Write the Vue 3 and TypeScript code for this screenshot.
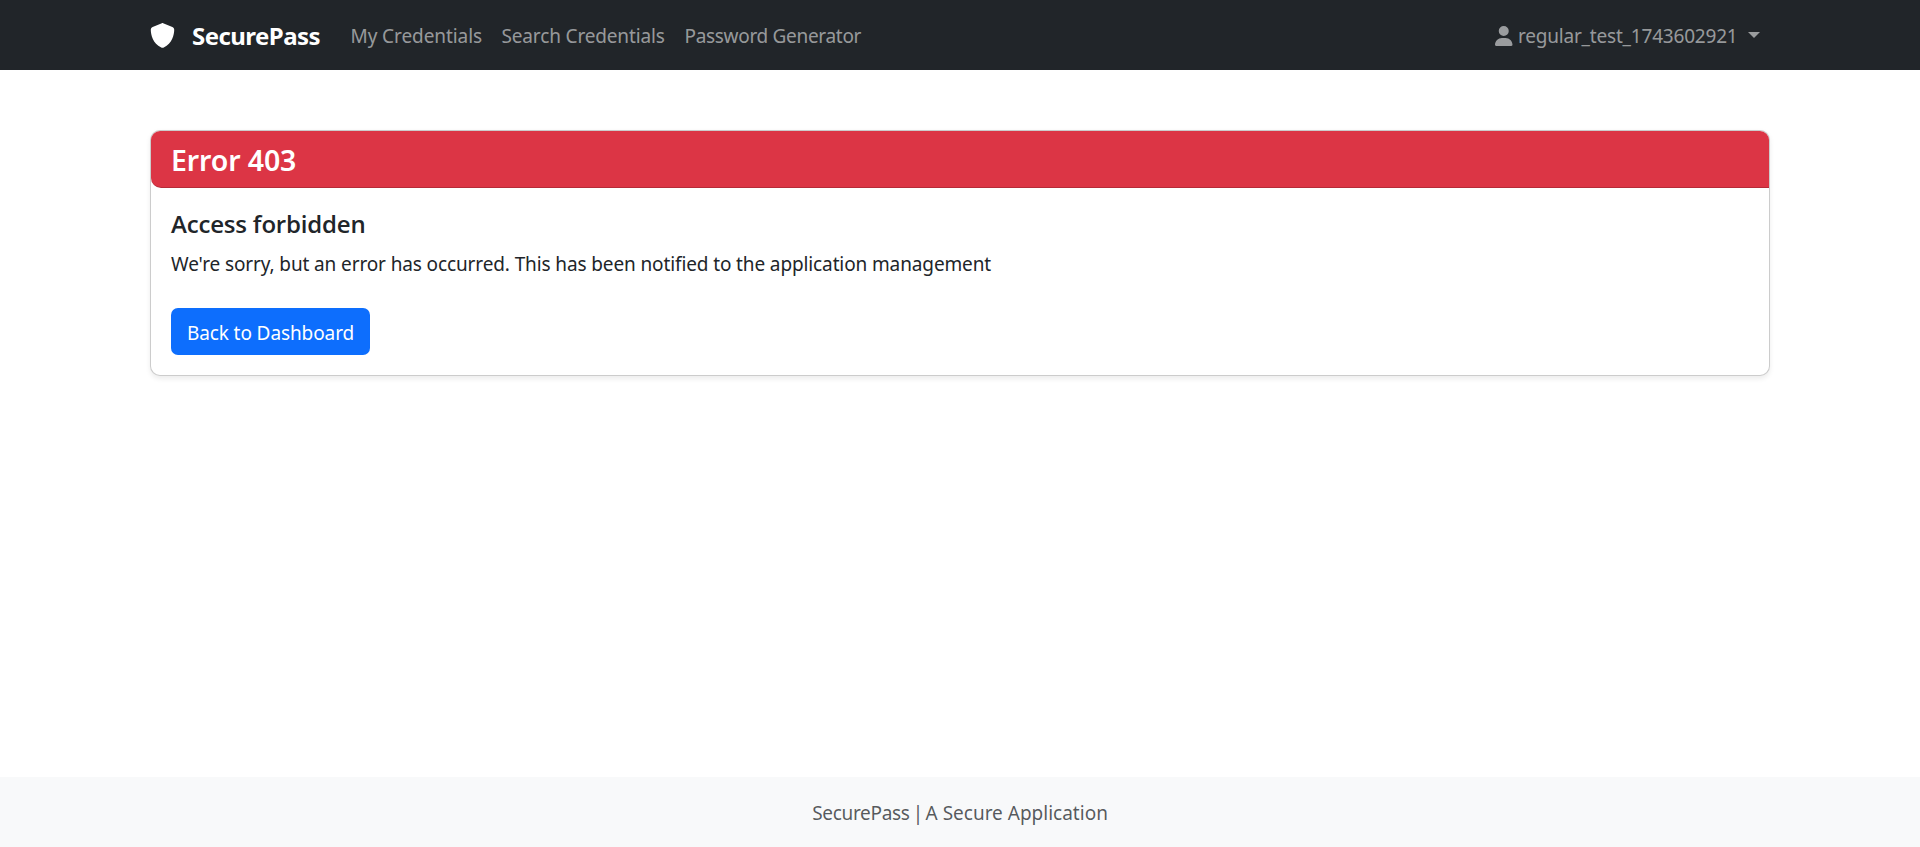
<script setup lang="ts">
interface NavItem {
  label: string
  name: string
}

const navItems: NavItem[] = [
  { label: 'My Credentials', name: 'credentials' },
  { label: 'Search Credentials', name: 'search' },
  { label: 'Password Generator', name: 'generator' },
]

const username = 'regular_test_1743602921'
const errorCode = 403
</script>

<template>
  <div class="page">
    <nav class="navbar">
      <div class="container navbar-inner">
        <a class="brand">
          <svg class="shield" viewBox="0 0 512 512" aria-hidden="true">
            <path
              fill="currentColor"
              d="M256 0c4.600 0 9.200 1 13.400 2.900L457.700 82.800c22 9.300 38.400 31 38.300 57.200c-.5 99.200-41.300 280.700-213.600 363.200c-16.700 8-36.100 8-52.800 0C57.300 420.700 16.500 239.200 16 140c-.1-26.200 16.300-47.900 38.300-57.200L242.700 2.900C246.800 1 251.400 0 256 0z"
            />
          </svg>
          <span class="brand-name">SecurePass</span>
        </a>
        <ul class="nav">
          <li v-for="item in navItems" :key="item.name">
            <a class="nav-link" :class="item.name">{{ item.label }}</a>
          </li>
        </ul>
        <a class="nav-link user">
          <svg class="user-icon" viewBox="0 0 448 512" aria-hidden="true">
            <path
              fill="currentColor"
              d="M224 256A128 128 0 1 0 224 0a128 128 0 1 0 0 256zm-45.700 48C79.800 304 0 383.800 0 482.300C0 498.700 13.300 512 29.700 512H418.300c16.400 0 29.700-13.300 29.700-29.700C448 383.800 368.200 304 269.700 304H178.300z"
            />
          </svg>
          <span class="user-name">{{ username }}</span>
          <span class="caret"></span>
        </a>
      </div>
    </nav>

    <main class="container main">
      <section class="card">
        <header class="card-header">
          <h4>Error {{ errorCode }}</h4>
        </header>
        <div class="card-body">
          <h5>Access forbidden</h5>
          <p class="message">We're sorry, but an error has occurred. This has been notified to the application management</p>
          <a class="button">Back to Dashboard</a>
        </div>
      </section>
    </main>

    <footer class="footer">
      <span><span class="product">SecurePass</span> <span class="divider">|</span> A Secure Application</span>
    </footer>
  </div>
</template>

<style>
body {
  margin: 0;
  background: #fff;
}
</style>

<style scoped>
.page {
  display: flex;
  flex-direction: column;
  min-height: 100vh;
  box-sizing: border-box;
  color: #212529;
  font-family: "Segoe UI", "Noto Sans", "Open Sans", sans-serif;
  font-size: 19px;
  line-height: 30px;
  letter-spacing: -0.12px;
  white-space: nowrap;
}

.container {
  width: 1620px;
  margin: 0 auto;
}

.navbar {
  background: #212529;
  color: #fff;
}

.navbar-inner {
  display: flex;
  align-items: center;
  height: 70px;
}

.brand {
  display: flex;
  align-items: center;
  width: 190.500px;
}

.shield {
  width: 25px;
  height: 25px;
  margin: 1px 17px 0 0;
}

.brand-name {
  font-size: 24px;
  font-weight: 700;
  line-height: 37px;
  letter-spacing: -0.55px;
}

.nav {
  display: flex;
  flex: 1;
  margin: 0;
  padding: 0;
  list-style: none;
}

.nav-link {
  display: block;
  box-sizing: border-box;
  padding: 11px 10px 9px;
  color: rgba(255, 255, 255, 0.55);
}

.credentials {
  width: 151px;
  letter-spacing: -0.08px;
}

.search {
  width: 183px;
  letter-spacing: -0.15px;
}

.generator {
  letter-spacing: -0.31px;
}

.user {
  display: flex;
  align-items: center;
}

.user-icon {
  width: 17.500px;
  height: 20px;
  margin: -1px 5.500px 0 0;
}

.user-name {
  width: 219px;
  letter-spacing: -0.2px;
}

.caret {
  margin: -2px 0 0 11px;
  border-top: 6px solid;
  border-right: 6px solid transparent;
  border-left: 6px solid transparent;
}

.main {
  flex: 1;
  padding-top: 60px;
}

.card {
  box-sizing: border-box;
  height: 246px;
  border: 1px solid rgba(0, 0, 0, 0.2);
  border-radius: 10px;
  background: #fff;
  box-shadow: 0 2.500px 5px rgba(0, 0, 0, 0.075);
}

.card-header {
  padding: 11px 20px 9px;
  border-bottom: 1px solid rgba(0, 0, 0, 0.175);
  border-radius: 9px 9px 0 10px;
  background: #dc3545;
  color: #fff;
}

h4,
h5 {
  margin: 0;
  font-weight: 600;
}

h4 {
  font-size: 28.500px;
  line-height: 36px;
  letter-spacing: -0.12px;
}

h5 {
  margin-bottom: 9px;
  padding-top: 1px;
  font-family: "Segoe UI", "Open Sans", sans-serif;
  font-size: 24px;
  line-height: 30px;
  letter-spacing: -0.18px;
}

.card-body {
  padding: 20px;
}

.message {
  margin: 0 0 29px;
  padding-top: 1px;
}

.button {
  display: inline-block;
  box-sizing: border-box;
  width: 199px;
  height: 47px;
  padding-top: 10px;
  border-radius: 7px;
  background: #0d6efd;
  color: #fff;
  letter-spacing: -0.1px;
  text-align: center;
}

.footer {
  padding: 21px 0 19px;
  background: #f8f9fa;
  color: rgba(33, 37, 41, 0.75);
  letter-spacing: 0;
  text-align: center;
}

.product {
  letter-spacing: -0.3px;
}

.divider {
  margin: 0 -2.500px 0 -2px;
}
</style>
